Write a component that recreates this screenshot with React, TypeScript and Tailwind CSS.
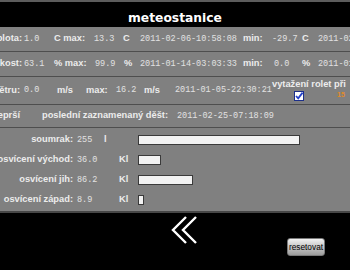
import React from "react";

const lbl = "font-['Liberation_Sans',Arial,sans-serif] font-bold text-[9.3px] text-[#ececec] leading-none";
const val = "font-['Liberation_Mono','Courier_New',monospace] text-[8.5px] text-[#e2e2e2] leading-none";

function Cell({ w, cls, children, extra = "" }: { w: string; cls: string; children?: React.ReactNode; extra?: string }) {
  return <div className={`shrink-0 ${w} ${cls} ${extra}`}>{children}</div>;
}

function Bar({ value }: { value: number }) {
  return (
    <div
      className="h-[10px] shrink-0 border border-[#3a3a3a] bg-[#f2f2f2]"
      style={{ width: Math.max(5, Math.round(value * 0.635)) }}
    />
  );
}

const lights = [
  { label: "soumrak:", value: "255", unit: "l", num: 255 },
  { label: "osvícení východ:", value: "36.0", unit: "Kl", num: 36.0 },
  { label: "osvícení jih:", value: "86.2", unit: "Kl", num: 86.2 },
  { label: "osvícení západ:", value: "8.9", unit: "Kl", num: 8.9 },
];

export default function App() {
  const row = "flex items-center whitespace-nowrap border-b border-[#4e4e4e]";
  return (
    <div className="w-[350px] h-[270px] overflow-hidden bg-black">
      {/* header */}
      <div className="h-[27px] border-t-2 border-[#5c5c5c] flex items-end justify-center">
        <h1 className="font-['DejaVu_Sans',Verdana,sans-serif] font-bold text-[12.3px] leading-[17px] text-white">
          meteostanice
        </h1>
      </div>

      <div className="bg-[#808080]">
        {/* teplota */}
        <div className={`${row} h-[25px]`}>
          <Cell w="w-[60px]" cls={lbl} extra="-ml-[38px] text-right">teplota:</Cell>
          <Cell w="w-[32px]" cls={val} extra="pl-[2px]">1.0</Cell>
          <Cell w="w-[40px]" cls={lbl}>C max:</Cell>
          <Cell w="w-[29px]" cls={val}>13.3</Cell>
          <Cell w="w-[17px]" cls={lbl}>C</Cell>
          <Cell w="w-[103px]" cls={val}>2011-02-06-10:58:08</Cell>
          <Cell w="w-[29px]" cls={lbl}>min:</Cell>
          <Cell w="w-[30px]" cls={val}>-29.7</Cell>
          <Cell w="w-[16px]" cls={lbl}>C</Cell>
          <Cell w="w-[103px]" cls={val}>2011-02-01-06:12:44</Cell>
        </div>

        {/* vlhkost */}
        <div className={`${row} h-[25px]`}>
          <Cell w="w-[60px]" cls={lbl} extra="-ml-[38px] text-right">vlhkost:</Cell>
          <Cell w="w-[32px]" cls={val} extra="pl-[2px]">63.1</Cell>
          <Cell w="w-[41px]" cls={lbl}>% max:</Cell>
          <Cell w="w-[29px]" cls={val}>99.9</Cell>
          <Cell w="w-[16px]" cls={lbl}>%</Cell>
          <Cell w="w-[103px]" cls={val}>2011-01-14-03:03:33</Cell>
          <Cell w="w-[29px]" cls={lbl}>min:</Cell>
          <Cell w="w-[30px]" cls={val} extra="pl-[2px]">0.0</Cell>
          <Cell w="w-[16px]" cls={lbl}>%</Cell>
          <Cell w="w-[103px]" cls={val}>2011-01-28-14:20:10</Cell>
        </div>

        {/* vitr + rolety */}
        <div className={`${row} h-[28px]`}>
          <Cell w="w-[80px]" cls={lbl} extra="-ml-[60px] text-right">rychlost větru:</Cell>
          <Cell w="w-[37px]" cls={val} extra="pl-[4px]">0.0</Cell>
          <Cell w="w-[29px]" cls={lbl}>m/s</Cell>
          <Cell w="w-[30px]" cls={lbl}>max:</Cell>
          <Cell w="w-[28px]" cls={val}>16.2</Cell>
          <Cell w="w-[31px]" cls={lbl}>m/s</Cell>
          <Cell w="w-[97px]" cls={val}>2011-01-05-22:30:21</Cell>
          <div className="shrink-0 flex flex-col self-start pt-[3px]">
            <span className={lbl}>vytažení rolet při</span>
            <div className="flex items-center mt-[1px]">
              <svg width="10" height="10" viewBox="0 0 10 10" className="ml-[22px]">
                <rect x="0.5" y="0.5" width="9" height="9" fill="#fff" stroke="#1c2f8a" />
                <path d="M2 5 L4.2 7.4 L8.6 1.6" fill="none" stroke="#2440c8" strokeWidth="1.8" />
              </svg>
              <span className="ml-[33px] font-['Liberation_Sans',Arial,sans-serif] text-[7px] font-bold text-[#e08a2a]">15</span>
            </div>
          </div>
        </div>

        {/* dest */}
        <div className={`${row} h-[23px]`}>
          <Cell w="w-[60px]" cls={lbl} extra="-ml-[40px] text-right">neprší</Cell>
          <Cell w="w-[157px]" cls={lbl} extra="pl-[22px]">poslední zaznamenaný děšt:</Cell>
          <Cell w="w-[110px]" cls={val}>2011-02-25-07:18:09</Cell>
        </div>

        {/* svetlo */}
        <div className="pt-[2px] pb-[1px]">
          {lights.map((l) => (
            <div key={l.label} className="flex items-center h-[20px] whitespace-nowrap">
              <Cell w="w-[110px]" cls={lbl} extra="-ml-[37px] text-right">{l.label}</Cell>
              <Cell w="w-[27px]" cls={val} extra="pl-[4px]">{l.value}</Cell>
              <Cell w="w-[38px]" cls={lbl} extra={l.unit === "l" ? "pl-[4px]" : "pl-[19px]"}>{l.unit}</Cell>
              <Bar value={l.num} />
            </div>
          ))}
        </div>
      </div>

      {/* bottom */}
      <div className="border-t-2 border-[#474747] flex items-start h-[56px]">
        <svg width="27" height="28" viewBox="0 0 27 28" className="ml-[171px] mt-[3px] shrink-0">
          <path d="M15 1 L2 14 L15 27" fill="none" stroke="#fff" strokeWidth="2.4" />
          <path d="M25 1 L12 14 L25 27" fill="none" stroke="#fff" strokeWidth="2.4" />
        </svg>
        <button className="ml-auto mr-[25px] mt-[25px] w-[38px] h-[18px] rounded-[3px] border border-[#7a7a7a] bg-linear-to-b from-[#f2f2f2] to-[#9c9c9c] font-['Liberation_Sans',Arial,sans-serif] text-[8.3px] text-black leading-none">
          resetovat
        </button>
      </div>
    </div>
  );
}
